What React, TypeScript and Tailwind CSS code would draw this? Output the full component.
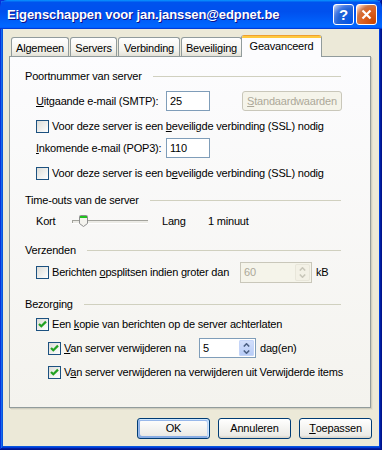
import React from "react";

const U = ({ children }: { children: React.ReactNode }) => (
  <span className="underline decoration-1 underline-offset-[1px]">{children}</span>
);

function Box({ checked }: { checked?: boolean }) {
  return (
    <span className="relative inline-block h-[13px] w-[13px] shrink-0 border border-[#1C5180] bg-[linear-gradient(135deg,#DCDCD7,#FFFFFF)]">
      {checked && (
        <svg className="absolute left-0 top-0" width="11" height="11" viewBox="0 0 11 11">
          <polyline points="2,5 4.3,7.3 9,2.6" fill="none" stroke="#21A121" strokeWidth="2.2" />
        </svg>
      )}
    </span>
  );
}

function Arrows({ color }: { color: string }) {
  return (
    <div className="flex h-full w-full flex-col items-center justify-center gap-[3px]">
      <svg width="7" height="4" viewBox="0 0 7 4">
        <polyline points="0.8,3.5 3.5,0.8 6.2,3.5" fill="none" stroke={color} strokeWidth="1.6" />
      </svg>
      <svg width="7" height="4" viewBox="0 0 7 4">
        <polyline points="0.8,0.5 3.5,3.2 6.2,0.5" fill="none" stroke={color} strokeWidth="1.6" />
      </svg>
    </div>
  );
}

function Heading({ text }: { text: string }) {
  return (
    <div className="flex h-[20px] items-center pl-[15px] pr-[29px]">
      <span>{text}</span>
      <span className="ml-[11px] h-px flex-1 bg-[#D0D0BF]" />
    </div>
  );
}

export default function App() {
  return (
    <div
      className="flex h-[450px] w-[382px] flex-col bg-[#0855DD] text-[11px] tracking-[-0.2px] text-black shadow-[inset_-1px_-1px_#00138c,inset_1px_1px_#0831d9,inset_-2px_-2px_#001ea0,inset_2px_2px_#166aee,inset_-3px_-3px_#003bda,inset_3px_3px_#0855dd]"
      style={{ fontFamily: '"Liberation Sans", Arial, sans-serif' }}
    >
      {/* Title bar */}
      <div className="flex h-[29px] shrink-0 items-center rounded-t-[7px] bg-[linear-gradient(180deg,#0997ff,#0053ee_8%,#0050ee_40%,#0066ff_88%,#0066ff_93%,#005bff_95%,#003dd7_96%,#003dd7)] pl-[7px] pr-[5px]">
        <span className="flex-1 pt-[1px] text-[13px] font-bold tracking-[-0.1px] text-white [text-shadow:1px_1px_#0f1089]">
          Eigenschappen voor jan.janssen@edpnet.be
        </span>
        <div className="flex gap-[2px]">
          <div className="flex h-[21px] w-[21px] items-center justify-center rounded-[3px] border border-white bg-[radial-gradient(circle_at_90%_90%,#0054E9_0%,#2263D5_55%,#4479E4_70%,#A3BBEC_90%,#ffffff_100%)] text-[15px] font-bold leading-none text-white">
            ?
          </div>
          <div className="flex h-[21px] w-[21px] items-center justify-center rounded-[3px] border border-white bg-[radial-gradient(circle_at_90%_90%,#CC4600_0%,#DC6527_55%,#CD7546_70%,#FFCCB2_90%,#ffffff_100%)]">
            <svg width="11" height="11" viewBox="0 0 11 11">
              <path d="M1.5 1.5 L9.5 9.5 M9.5 1.5 L1.5 9.5" stroke="white" strokeWidth="2.2" />
            </svg>
          </div>
        </div>
      </div>

      {/* Body */}
      <div className="mx-[3px] mb-[4px] flex flex-1 flex-col bg-[#ECE9D8] pl-[6px] pt-[6px]">
        {/* Tabs */}
        <div className="relative z-10 flex h-[21px] items-end pl-[2px]">
          <div className="flex h-[19px] w-[58px] items-center justify-center rounded-t-[3px] border border-b-0 border-[#919B9C] bg-[linear-gradient(180deg,#FFFFFF,#F3F2EC_70%,#E3E1D7)] pt-[2px]">
            Algemeen
          </div>
          <div className="ml-[1px] flex h-[19px] w-[47px] items-center justify-center rounded-t-[3px] border border-b-0 border-[#919B9C] bg-[linear-gradient(180deg,#FFFFFF,#F3F2EC_70%,#E3E1D7)] pt-[2px]">
            Servers
          </div>
          <div className="ml-[1px] flex h-[19px] w-[62px] items-center justify-center rounded-t-[3px] border border-b-0 border-[#919B9C] bg-[linear-gradient(180deg,#FFFFFF,#F3F2EC_70%,#E3E1D7)] pt-[2px]">
            Verbinding
          </div>
          <div className="ml-[1px] flex h-[19px] w-[61px] items-center justify-center rounded-t-[3px] border border-b-0 border-[#919B9C] bg-[linear-gradient(180deg,#FFFFFF,#F3F2EC_70%,#E3E1D7)] pt-[2px]">
            Beveiliging
          </div>
          <div className="-mb-px ml-[-1px] flex h-[22px] w-[81px] flex-col overflow-hidden rounded-t-[3px] border-x border-[#919B9C] bg-[#FCFCFE]">
            <div className="h-[3px] shrink-0 bg-[linear-gradient(180deg,#E68B2C,#FFC83C_50%,#FFC83C)]" />
            <div className="flex flex-1 items-center justify-center pb-[2px]">Geavanceerd</div>
          </div>
        </div>

        {/* Panel */}
        <div className="h-[352px] w-[362px] border border-[#919B9C] bg-[linear-gradient(180deg,#FCFCFE,#F4F3EE)] pt-[9px] shadow-[1px_1px_0_#D0CEBF,2px_2px_0_#E3E0D0]">
          <Heading text="Poortnummer van server" />

          <div className="mt-[5px] flex h-[20px] items-center pl-[26px]">
            <span className="w-[130px]">
              <U>U</U>itgaande e-mail (SMTP):
            </span>
            <div className="flex h-[20px] w-[44px] items-center border border-[#7F9DB9] bg-white pl-[3px]">25</div>
            <div className="ml-[32px] flex h-[20px] w-[100px] items-center justify-center rounded-[3px] border border-[#C9C7BA] bg-[#F5F4EA] text-[#ACA899]">
              <U>S</U>tandaardwaarden
            </div>
          </div>

          <div className="mt-[5px] flex h-[20px] items-center gap-[3px] pl-[26px]">
            <Box />
            <span>
              Voor deze server is een <U>b</U>eveiligde verbinding (SSL) nodig
            </span>
          </div>

          <div className="mt-[2px] flex h-[20px] items-center pl-[26px]">
            <span className="w-[130px]">
              <U>I</U>nkomende e-mail (POP3):
            </span>
            <div className="flex h-[20px] w-[44px] items-center border border-[#7F9DB9] bg-white pl-[3px]">110</div>
          </div>

          <div className="mt-[5px] flex h-[20px] items-center gap-[3px] pl-[26px]">
            <Box />
            <span>
              Voor deze server is een b<U>e</U>veiligde verbinding (SSL) nodig
            </span>
          </div>

          <div className="mt-[7px]">
            <Heading text="Time-outs van de server" />
          </div>

          <div className="mt-[1px] flex h-[20px] items-center pl-[26px]">
            <span className="w-[36px]">Kort</span>
            <div className="relative h-[20px] w-[76px]">
              <div className="absolute left-0 top-[9px] h-[3px] w-[76px] border-t border-l border-[#A3A39C] bg-[#ECEBE6] shadow-[0_1px_0_#FFFFFF]" />
              <svg className="absolute left-[7px] top-[4px]" width="9" height="12" viewBox="0 0 9 12">
                <path
                  d="M0.5 1.5 Q0.5 0.5 1.5 0.5 H7.5 Q8.5 0.5 8.5 1.5 V8.5 L4.5 11.5 L0.5 8.5 Z"
                  fill="#F4F3EE"
                  stroke="#8E8F8F"
                />
                <rect x="1" y="1" width="7" height="2" fill="#21C121" />
              </svg>
            </div>
            <span className="ml-[14px] w-[46px]">Lang</span>
            <span>1 minuut</span>
          </div>

          <div className="mt-[9px]">
            <Heading text="Verzenden" />
          </div>

          <div className="mt-[2px] flex h-[21px] items-center pl-[26px]">
            <Box />
            <span className="ml-[3px] w-[188px]">
              Berichten <U>o</U>psplitsen indien groter dan
            </span>
            <div className="flex h-[21px] w-[72px] border border-[#C9C7BA] bg-[#F5F4EA]">
              <span className="flex flex-1 items-center pl-[3px] text-[#ACA899]">60</span>
              <div className="m-[1px] w-[15px] rounded-[2px] bg-[#F3F1E6] shadow-[inset_0_0_0_1px_#E8E6DA]">
                <Arrows color="#C9C7BA" />
              </div>
            </div>
            <span className="ml-[4px]">kB</span>
          </div>

          <div className="mt-[11px]">
            <Heading text="Bezorging" />
          </div>

          <div className="flex h-[20px] items-center gap-[3px] pl-[26px]">
            <Box checked />
            <span>
              Een <U>k</U>opie van berichten op de server achterlaten
            </span>
          </div>

          <div className="mt-[4px] flex h-[20px] items-center pl-[38px]">
            <Box checked />
            <span className="ml-[3px] w-[135px]">
              <U>V</U>an server verwijderen na
            </span>
            <div className="flex h-[20px] w-[57px] border border-[#7F9DB9] bg-white">
              <span className="flex flex-1 items-center pl-[3px]">5</span>
              <div className="m-[1px] w-[15px] rounded-[2px] bg-[linear-gradient(180deg,#D4E0FB,#B6CBF7)] shadow-[inset_0_0_0_1px_#C5D5F8]">
                <Arrows color="#4D6185" />
              </div>
            </div>
            <span className="ml-[4px]">dag(en)</span>
          </div>

          <div className="mt-[4px] flex h-[20px] items-center gap-[3px] pl-[38px]">
            <Box checked />
            <span>
              V<U>a</U>n server verwijderen na verwijderen uit Verwijderde items
            </span>
          </div>
        </div>

        {/* Buttons */}
        <div className="mt-[10px] flex gap-[8px] pl-[128px]">
          <div className="flex h-[21px] w-[73px] items-center justify-center rounded-[3px] border border-[#003C74] bg-[linear-gradient(180deg,#FFFFFF,#ECEBE6_86%,#D6D0C5)] shadow-[inset_-1px_1px_#cee7ff,inset_1px_2px_#98b8ea,inset_-2px_2px_#bcd4f6,inset_1px_-1px_#89ade4,inset_2px_-2px_#89ade4]">
            OK
          </div>
          <div className="flex h-[21px] w-[73px] items-center justify-center rounded-[3px] border border-[#003C74] bg-[linear-gradient(180deg,#FFFFFF,#ECEBE6_86%,#D6D0C5)]">
            Annuleren
          </div>
          <div className="flex h-[21px] w-[73px] items-center justify-center rounded-[3px] border border-[#003C74] bg-[linear-gradient(180deg,#FFFFFF,#ECEBE6_86%,#D6D0C5)]">
            <U>T</U>oepassen
          </div>
        </div>
      </div>
    </div>
  );
}
